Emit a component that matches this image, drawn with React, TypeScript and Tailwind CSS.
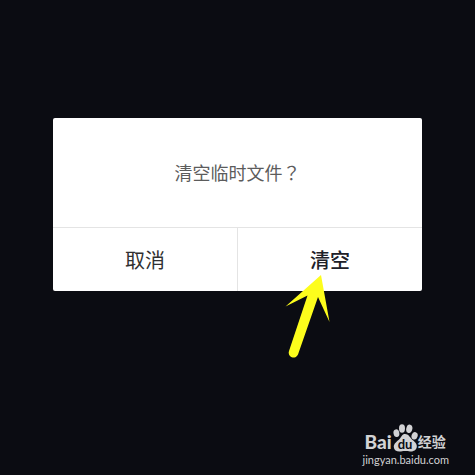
import React from 'react';

interface DialogButtonProps {
  label: string;
  className?: string;
}

const DialogButton: React.FC<DialogButtonProps> = ({ label, className = '' }) => (
  <button type="button" className={`flex-1 h-[63px] text-xl ${className}`}>
    {label}
  </button>
);

const PointerArrow = () => (
  <svg
    className="absolute right-[92px] top-[157px] pointer-events-none"
    width="46"
    height="84"
    viewBox="0 0 46 84"
    aria-hidden="true"
  >
    <path
      d="M37 0 L1.500 31.500 L23.500 20.500 L5 76 A4.700 4.700 0 0 0 14 79.500 L34 22 L45.500 47 Z"
      fill="#fdfd1c"
    />
  </svg>
);

const PawLogo = () => (
  <svg width="26" height="28" viewBox="0 0 26 28" aria-label="du">
    <g fill="#d2d2d4">
      <ellipse cx="4.400" cy="9.200" rx="2.900" ry="3.900" transform="rotate(-12 4.400 9.200)" />
      <ellipse cx="10" cy="4.500" rx="3" ry="4.200" />
      <ellipse cx="17.300" cy="4.800" rx="3" ry="4.200" transform="rotate(14 17.300 4.800)" />
      <ellipse cx="22.600" cy="11.800" rx="3" ry="3.800" transform="rotate(18 22.600 11.800)" />
      <path d="M13 10 C16.500 10 17.500 13 20 15.500 C22.500 17.700 25.300 19.500 24.800 23 C24.300 26.500 21 27.700 18 27.400 C15 27 12 27 9 27.400 C5 27.900 2 26.500 1.800 23 C1.600 19.500 5 17.500 7.500 15 C9.500 12.800 10 10 13 10 Z" />
    </g>
    <text
      x="13"
      y="25"
      textAnchor="middle"
      fontSize="13"
      fontWeight="700"
      fill="#0b0c12"
      fontFamily="Lato, sans-serif"
    >
      du
    </text>
  </svg>
);

const Watermark = () => (
  <div className="self-end mr-[26px] mb-2 font-['Lato','Noto_Sans_CJK_SC',sans-serif] text-[#d2d2d4]">
    <div className="flex items-end h-7 ml-0.5">
      <span className="text-[19px] leading-5 font-black">Bai</span>
      <PawLogo />
      <span className="pb-0.5 text-sm leading-4 font-bold">经验</span>
    </div>
    <p className="text-[11px] leading-[15px]">jingyan.baidu.com</p>
  </div>
);

export default function App() {
  return (
    <main className="min-h-screen flex flex-col justify-between bg-[#0b0c12] font-['Noto_Sans_CJK_SC',sans-serif]">
      <div className="relative mx-[53px] mt-[118px] rounded-xs bg-white" role="dialog" aria-labelledby="dialog-title">
        <h1
          id="dialog-title"
          className="py-[42px] text-center font-['Noto_Sans_CJK_SC',sans-serif] text-lg leading-[25px] text-[#5c5c5c]"
        >
          清空临时文件<span className="font-['Noto_Sans_CJK_TC',sans-serif]" lang="zh-TW">？</span>
        </h1>
        <div className="flex border-t border-[#e4e4e4] divide-x divide-[#e4e4e4]">
          <DialogButton label="取消" className="text-[#303030]" />
          <DialogButton label="清空" className="font-medium text-[#202028]" />
        </div>
        <PointerArrow />
      </div>
      <Watermark />
    </main>
  );
}
